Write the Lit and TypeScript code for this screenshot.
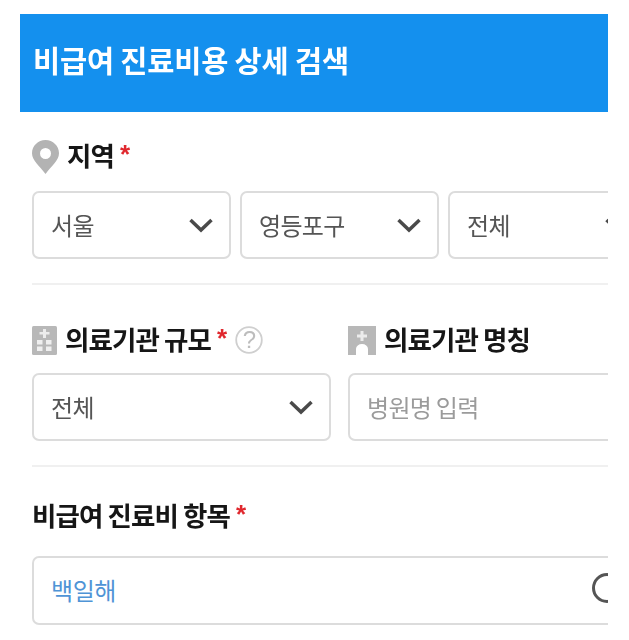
import { LitElement, html, css, svg } from "lit";
import { customElement } from "lit/decorators.js";

const chevron = svg`<svg class="chev" viewBox="0 0 26 16" width="26" height="16"><path d="M2.5 3 L13 13 L23.5 3" fill="none" stroke="#4a4a4a" stroke-width="3.5"/></svg>`;

@customElement("app-root")
export class AppRoot extends LitElement {
  static styles = css`
    :host { display: block; background: #fff; font-family: "Noto Sans CJK KR", "Noto Sans", sans-serif; }
    .frame { width: 588px; margin-left: 20px; padding-top: 14px; overflow: hidden; filter: blur(0.5px); }
    .header { height: 98px; background: #1490ee; display: flex; align-items: center; padding: 0 0 9px 13px; box-sizing: border-box;
      color: #fff; font-size: 29.5px; font-weight: 700; letter-spacing: -0.2px; }
    .body { padding-left: 12px; }
    .label { display: flex; align-items: center; font-size: 26.5px; font-weight: 700; color: #161616; letter-spacing: -0.9px; line-height: 36px; white-space: nowrap; }
    .label > span:first-of-type { position: relative; top: -1px; }
    .star { color: #e0282e; font-size: 26px; margin-left: 6px; position: relative; top: -2px; font-family: "Liberation Sans", sans-serif; font-weight: 700; letter-spacing: 0; }
    .region { padding-top: 26px; }
    .region .label { height: 36px; }
    .pin { margin-right: 8px; position: relative; top: 1px; }
    .row { display: flex; gap: 9px; margin-top: 17px; width: 640px; }
    .box { box-sizing: border-box; height: 68px; border: 2px solid #dcdcdc; border-radius: 7px; background: #fff; display: flex; align-items: center;
      padding: 0 15px 2px 17px; justify-content: space-between; font-size: 24px; color: #555; letter-spacing: -0.7px; flex: none; }
    .chev { position: relative; top: 1px; }
    .w199 { width: 199px; }
    .divider { height: 2px; background: #f0f0f0; margin-top: 24px; }
    .two { display: flex; gap: 17px; padding-top: 37px; width: 640px; }
    .col { flex: none; }
    .col.a { width: 299px; }
    .col.b { width: 300px; }
    .ico { margin-right: 8px; flex: none; }
    .q { margin-left: 8px; flex: none; }
    .col .box { margin-top: 15px; width: 100%; }
    .ph { color: #9b9b9b; }
    .item { padding-top: 30px; }
    .item .label { line-height: 38px; }
    .search { margin-top: 21px; width: 640px; height: 69px; color: #4f94d6; letter-spacing: -0.4px; position: relative; }
    .circle { position: absolute; left: 558px; top: 15px; width: 30px; height: 30px; border: 3px solid #555; border-radius: 50%; box-sizing: border-box; }
  `;

  render() {
    return html`
      <div class="frame">
        <div class="header">비급여 진료비용 상세 검색</div>
        <div class="body">
          <div class="region">
            <div class="label">
              <svg class="pin" width="27" height="34" viewBox="0 0 27 34"><path fill-rule="evenodd" fill="#b3b3b3" d="M13.5 0C6 0 0 6 0 13.2c0 7.500 8 13 13.500 20.800C19 26.200 27 20.700 27 13.200 27 6 21 0 13.500 0Zm0 8a5.500 5.500 0 1 1 0 11 5.500 5.500 0 0 1 0-11Z"/></svg>
              <span>지역</span><span class="star">*</span>
            </div>
            <div class="row">
              <div class="box w199">서울${chevron}</div>
              <div class="box w199">영등포구${chevron}</div>
              <div class="box w199">전체${chevron}</div>
            </div>
            <div class="divider"></div>
          </div>
          <div class="two">
            <div class="col a">
              <div class="label">
                <svg class="ico" width="25" height="29" viewBox="0 0 25 29"><rect width="25" height="29" rx="1.500" fill="#b8b8b8"/><path fill="#ececec" d="M11 3h3v3h3.500v2.500H14V12h-3V8.500H7.500V6H11z"/><g fill="#efefef"><rect x="5" y="14" width="5.500" height="4.500"/><rect x="14" y="14" width="5.500" height="4.500"/><rect x="5" y="20.500" width="5.500" height="4.500"/><rect x="14" y="20.500" width="5.500" height="4.500"/></g></svg>
                <span>의료기관 규모</span><span class="star">*</span>
                <svg class="q" width="28" height="28" viewBox="0 0 28 28"><circle cx="14" cy="14" r="12.800" fill="none" stroke="#cfcfcf" stroke-width="1.800"/><text x="14" y="22" text-anchor="middle" font-size="24" font-weight="400" fill="#bdbdbd" font-family="Liberation Sans">?</text></svg>
              </div>
              <div class="box">전체${chevron}</div>
            </div>
            <div class="col b">
              <div class="label">
                <svg class="ico" width="28" height="29" viewBox="0 0 28 29"><path fill="#b8b8b8" d="M0 0h28v29h-8v-6a6 5 0 0 0-12 0v6H0Z"/><path fill="#ececec" d="M12.500 5h3v3.500H19v3h-3.500V15h-3v-3.500H9v-3h3.500z"/></svg>
                <span>의료기관 명칭</span>
              </div>
              <div class="box ph">병원명 입력</div>
            </div>
          </div>
          <div class="divider"></div>
          <div class="item">
            <div class="label"><span>비급여 진료비 항목</span><span class="star">*</span></div>
            <div class="box search">백일해<span class="circle"></span></div>
          </div>
        </div>
      </div>
    `;
  }
}
